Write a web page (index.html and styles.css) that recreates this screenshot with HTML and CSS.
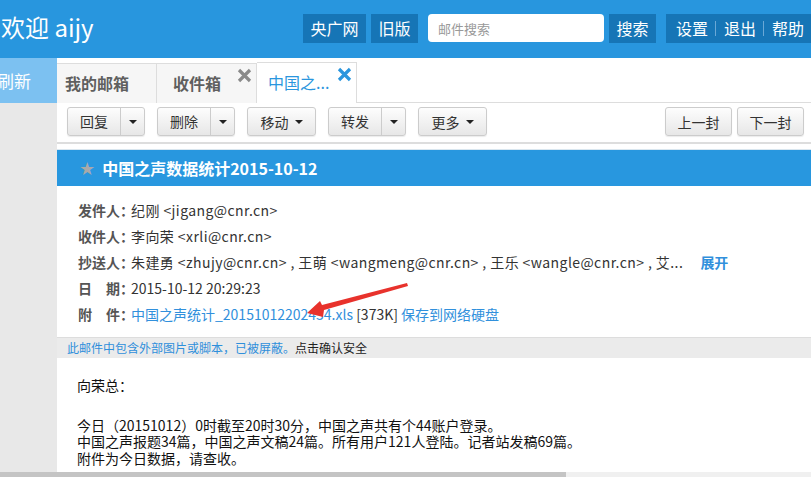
FILE: index.html
```html
<!DOCTYPE html>
<html lang="zh-CN">
<head>
    <meta charset="UTF-8">
    <title>中国之声数据统计2015-10-12</title>
    <link rel="stylesheet" href="styles.css">
</head>
<body>

<div id="header">
    <div class="welcome">欢迎 aijy</div>
    <div class="head-right">
        <span class="head-btn">央广网</span>
        <span class="head-btn">旧版</span>
        <input class="search" type="text" placeholder="邮件搜索">
        <span class="head-btn">搜索</span>
        <div class="head-links">
            <span>设置</span><i class="sep"></i><span>退出</span><i class="sep"></i><span>帮助</span>
        </div>
    </div>
</div>

<div id="page">
    <div id="sidebar">
        <div class="refresh">刷新</div>
    </div>

    <div id="main">
        <div class="tabs">
            <div class="tab">我的邮箱</div>
            <div class="tab">收件箱
                <svg class="close" width="15" height="15" viewBox="0 0 15 15"><path d="M2 2L13 13M13 2L2 13" stroke="#8a8a8a" stroke-width="3.2"/></svg>
            </div>
            <div class="tab active">中国之...
                <svg class="close" width="15" height="15" viewBox="0 0 15 15"><path d="M2 2L13 13M13 2L2 13" stroke="#2a96de" stroke-width="3.2"/></svg>
            </div>
        </div>

        <div class="toolbar">
            <div class="btn split"><span class="lbl">回复</span><span class="drop"><i class="caret"></i></span></div>
            <div class="btn split"><span class="lbl">删除</span><span class="drop"><i class="caret"></i></span></div>
            <div class="btn menu">移动 <i class="caret"></i></div>
            <div class="btn split"><span class="lbl">转发</span><span class="drop"><i class="caret"></i></span></div>
            <div class="btn menu">更多 <i class="caret"></i></div>
            <div class="spacer"></div>
            <div class="btn nav">上一封</div>
            <div class="btn nav">下一封</div>
        </div>

        <div class="subject">
            <span class="star">★</span>
            <span>中国之声数据统计2015-10-12</span>
        </div>

        <div class="info">
            <div class="row"><span class="label">发件人：</span><span class="addr">纪刚 &lt;jigang@cnr.cn&gt;</span></div>
            <div class="row"><span class="label">收件人：</span><span class="addr">李向荣 &lt;xrli@cnr.cn&gt;</span></div>
            <div class="row"><span class="label">抄送人：</span><span class="addr">朱建勇 &lt;zhujy@cnr.cn&gt; , 王萌 &lt;wangmeng@cnr.cn&gt; , 王乐 &lt;wangle@cnr.cn&gt; , 艾...</span> <a class="expand">展开</a></div>
            <div class="row"><span class="label">日　期：</span>2015-10-12 20:29:23</div>
            <div class="row"><span class="label">附　件：</span><a>中国之声统计_20151012202434.xls</a> [373K] <a>保存到网络硬盘</a></div>
        </div>

        <div class="blocked"><span class="warn">此邮件中包含外部图片或脚本，已被屏蔽。</span>点击确认安全</div>

        <div class="content">
            <p class="greet">向荣总：</p>
            <p>今日（20151012）0时截至20时30分，中国之声共有个44账户登录。<br>
            中国之声报题34篇，中国之声文稿24篇。所有用户121人登陆。记者站发稿69篇。<br>
            附件为今日数据，请查收。</p>
        </div>
    </div>
</div>

<div class="hscroll"><div class="thumb"></div></div>

<!-- red annotation arrow drawn over the screenshot -->
<svg class="arrow" width="811" height="477" viewBox="0 0 811 477">
    <polygon points="307,313 320,301 322,305 407,283 408,286 324,310 323,317" fill="#e8322c"/>
</svg>

</body>
</html>
```

FILE: styles.css
```css
body {
    margin: 0;
    font-family: "Noto Sans CJK SC", "Open Sans", sans-serif;
    font-size: 14px;
    color: #333;
    overflow: hidden;
    height: 477px;
    position: relative;
}

#header {
    height: 58px;
    background-color: #2896de;
    display: flex;
    align-items: center;
    justify-content: space-between;
    color: #fff;
}

.welcome {
    font-size: 24px;
    line-height: 30px;
    padding-bottom: 5px;
    padding-left: 1px;
}

.head-right {
    display: flex;
    align-items: center;
    height: 29px;
    margin-top: -2px;
}

.head-btn {
    background-color: #1675b6;
    height: 29px;
    line-height: 29px;
    padding: 0 7.5px;
    font-size: 16px;
    margin-left: 5px;
}

.search {
    width: 176px;
    height: 28px;
    box-sizing: border-box;
    border: none;
    border-radius: 4px;
    margin: 0 0 0 10px;
    padding: 0 10px;
    font-family: "Noto Sans CJK SC", sans-serif;
    font-size: 13px;
    color: #999;
}

.search::placeholder {
    color: #999;
}

.head-links {
    background-color: #1675b6;
    height: 29px;
    display: flex;
    align-items: center;
    margin-left: 10px;
    padding: 0 7px 0 10px;
    font-size: 16px;
}

.sep {
    display: inline-block;
    width: 1px;
    height: 15px;
    background-color: #6aa8d6;
    margin: 0 8px 0 7px;
}

#page {
    display: flex;
    height: 419px;
}

#sidebar {
    width: 57px;
    flex: none;
    background-color: #e8e8e8;
    overflow: hidden;
}

.refresh {
    height: 45px;
    line-height: 45px;
    background-color: #7cc1f1;
    color: #fff;
    font-size: 17px;
    text-indent: -3px;
}

#main {
    flex: 1;
    background-color: #fff;
    overflow: hidden;
}

.tabs {
    height: 45px;
    box-sizing: border-box;
    border-bottom: 1px solid #ddd;
    display: flex;
    align-items: flex-end;
}

.tab {
    position: relative;
    width: 100px;
    height: 40px;
    box-sizing: border-box;
    border: 1px solid #ddd;
    border-left: none;
    border-bottom: none;
    background-color: #f6f6f6;
    margin-bottom: -1px;
    line-height: 38px;
    padding-left: 8px;
    font-size: 16px;
    font-weight: bold;
    color: #5f5f5f;
}

.tab + .tab {
    padding-left: 16px;
}

.tab.active {
    background-color: #fff;
    color: #2a96de;
    font-weight: normal;
    height: 41px;
    padding-left: 11px;
}

.close {
    position: absolute;
    right: 4px;
    top: 4px;
}

.toolbar {
    height: 41px;
    box-sizing: border-box;
    border-bottom: 2px solid #ddd;
    display: flex;
    align-items: center;
    padding: 0 7px 2px 10px;
}

.btn {
    height: 29px;
    box-sizing: border-box;
    border: 1px solid #ccc;
    border-radius: 3px;
    background: linear-gradient(#fdfdfd, #e7e7e7);
    box-shadow: 0 1px 1px rgba(0, 0, 0, 0.08);
    display: flex;
    align-items: center;
    font-size: 14px;
    color: #333;
    margin-right: 12px;
}

.split .lbl {
    width: 52px;
    text-align: center;
    border-right: 1px solid #ccc;
    height: 27px;
    line-height: 27px;
}

.split .drop {
    width: 23px;
    display: flex;
    justify-content: center;
}

.menu {
    width: 69px;
    justify-content: center;
}

.caret {
    display: inline-block;
    width: 0;
    height: 0;
    border-left: 4px solid transparent;
    border-right: 4px solid transparent;
    border-top: 4px solid #222;
    margin-left: 6px;
}

.split .caret {
    margin-left: 0;
}

.spacer {
    flex: 1;
}

.btn.nav {
    width: 67px;
    justify-content: center;
    margin-right: 0;
    margin-left: 5px;
}

.subject {
    margin-top: 5px;
    height: 36px;
    background-color: #2897df;
    border-top: 1px solid #d9e6ef;
    color: #fff;
    display: flex;
    align-items: center;
    padding-left: 22px;
    font-size: 16px;
    font-weight: bold;
}

.star {
    color: #a9a9a9;
    font-size: 18px;
    margin-right: 7px;
    font-family: "DejaVu Sans", sans-serif;
}

.info {
    padding: 11px 0 10px 21px;
    border-bottom: 1px solid #ddd;
    color: #333;
}

.row {
    height: 26px;
    line-height: 26px;
    white-space: nowrap;
}

.label {
    font-weight: bold;
    color: #555;
    margin-right: -3px;
}

.addr {
    letter-spacing: 0.42px;
}

a {
    color: #3190dc;
}

.expand {
    font-weight: bold;
    margin-left: 14px;
}

.blocked {
    height: 20px;
    line-height: 20px;
    background-color: #ebebeb;
    font-size: 12px;
    padding-left: 10px;
    color: #222;
}

.warn {
    color: #2f8fdb;
}

.content {
    padding: 19px 20px;
    font-size: 14px;
    color: #111;
    line-height: 16.5px;
}

.content p {
    margin: 0;
}

.content .greet {
    margin-bottom: 23px;
}

.hscroll {
    position: absolute;
    left: 0;
    right: 0;
    bottom: 0;
    height: 5px;
    background-color: #f0f0f0;
}

.thumb {
    width: 566px;
    height: 5px;
    background-color: #c4c4c4;
}

.arrow {
    position: absolute;
    left: 0;
    top: 0;
    pointer-events: none;
}
```
